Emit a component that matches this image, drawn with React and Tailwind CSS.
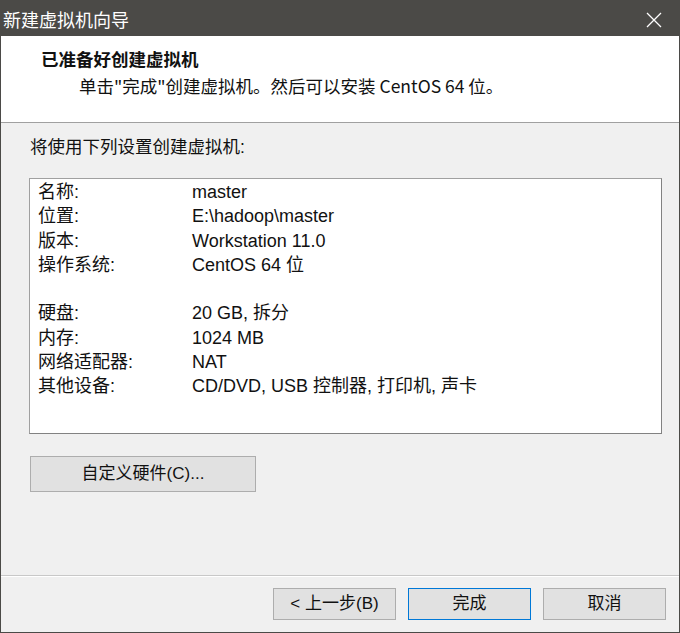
import React from "react";

const settings = [
  { label: "名称:", value: "master" },
  { label: "位置:", value: "E:\\hadoop\\master" },
  { label: "版本:", value: "Workstation 11.0" },
  { label: "操作系统:", value: "CentOS 64 位" },
  null,
  { label: "硬盘:", value: "20 GB, 拆分" },
  { label: "内存:", value: "1024 MB" },
  { label: "网络适配器:", value: "NAT" },
  { label: "其他设备:", value: "CD/DVD, USB 控制器, 打印机, 声卡" },
];

const App = () => {
  return (
    <div className="w-[680px] h-[633px] flex flex-col bg-[#f0f0f0] border border-t-0 border-[#4b4a47] text-[#111] font-['Liberation_Sans','Noto_Sans_CJK_SC',sans-serif]">
      {/* Title bar */}
      <div className="h-[36px] shrink-0 bg-[#4b4a47] flex items-center justify-between pl-[2px] pr-[17px]">
        <span className="text-white text-[18px] leading-[24px] pt-[2px] font-['Noto_Sans_CJK_SC',sans-serif]">新建虚拟机向导</span>
        <svg width="16" height="16" viewBox="0 0 16 16" className="mt-[3px]">
          <path d="M1 1 L15 15 M15 1 L1 15" stroke="#ffffff" strokeWidth="1.3" fill="none" />
        </svg>
      </div>

      {/* Header */}
      <div className="h-[87px] shrink-0 bg-white border-b border-[#a0a0a0] pl-[40px] pt-[11px] font-['Noto_Sans_CJK_SC',sans-serif]">
        <div className="text-[17.5px] font-bold leading-[24px]">已准备好创建虚拟机</div>
        <div className="text-[17.5px] leading-[24px] mt-[3px] pl-[38px]">
          单击"完成"创建虚拟机。然后可以安装 CentOS 64 位。
        </div>
      </div>

      {/* Body */}
      <div className="flex-1 px-[28px] pt-[12px]">
        <div className="text-[17.5px] leading-[24px] pl-[1px]">将使用下列设置创建虚拟机:</div>
        <div className="mt-[19px] w-[633px] h-[256px] bg-white border border-[#a0a0a0] border-r-[#828282] border-b-[#828282] pl-[8px] pt-[1px] text-[18px] leading-[24.3px]">
          {settings.map((row, i) =>
            row ? (
              <div key={i} className="flex">
                <span className="w-[154px] shrink-0">{row.label}</span>
                <span>{row.value}</span>
              </div>
            ) : (
              <div key={i} className="h-[24.3px]" />
            )
          )}
        </div>
        <button className="mt-[22px] ml-[1px] w-[226px] h-[36px] bg-[#e1e1e1] border border-[#adadad] text-[17px]">
          自定义硬件(C)...
        </button>
      </div>

      {/* Separator */}
      <div className="h-[2px] shrink-0 border-t border-[#c8c8c8] bg-white" />

      {/* Footer */}
      <div className="h-[55px] shrink-0 flex justify-end items-start gap-[12px] pt-[11px] pr-[13px] text-[17px]">
        <button className="w-[123px] h-[32px] bg-[#e1e1e1] border border-[#adadad]">&lt; 上一步(B)</button>
        <button className="w-[123px] h-[32px] bg-[#e1e1e1] border border-[#0078d7]">完成</button>
        <button className="w-[123px] h-[32px] bg-[#e1e1e1] border border-[#adadad]">取消</button>
      </div>
    </div>
  );
};

export default App;
